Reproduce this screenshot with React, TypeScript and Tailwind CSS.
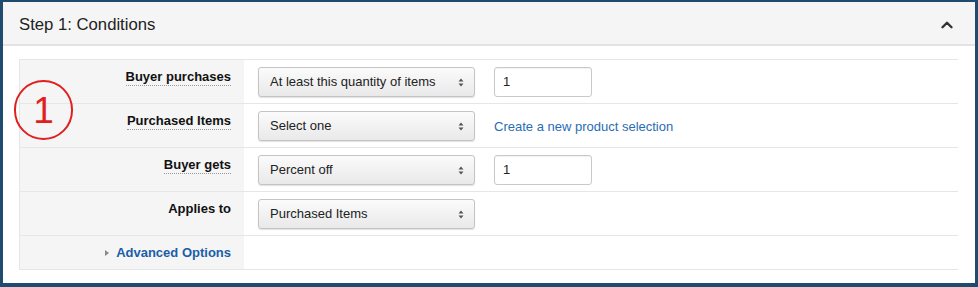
import { ChevronUp } from 'lucide-react';

function Arrows() {
  return (
    <svg width="6" height="9" viewBox="0 0 6 9" className="shrink-0">
      <path d="M3 0.5 L5.5 3.5 L0.5 3.5 Z" fill="#555" />
      <path d="M3 8.5 L5.5 5.5 L0.5 5.5 Z" fill="#555" />
    </svg>
  );
}

function FakeSelect({ value }: { value: string }) {
  return (
    <div className="w-[217px] h-[30px] flex items-center justify-between pl-[11px] pr-[10px] rounded-[3px] border border-[#c4c4c4] bg-gradient-to-b from-[#fbfbfb] to-[#e9e9e9] shadow-[0_1px_1px_rgba(0,0,0,0.12)] text-[13px] text-[#222]">
      <span>{value}</span>
      <Arrows />
    </div>
  );
}

function FakeInput({ value }: { value: string }) {
  return (
    <div className="w-[98px] h-[30px] flex items-center pl-[8px] rounded-[3px] border border-[#c9c9c9] bg-white shadow-[inset_0_1px_1px_rgba(0,0,0,0.06)] text-[13px] text-[#222]">
      {value}
    </div>
  );
}

export default function App() {
  const rows = [
    { label: "Buyer purchases", dotted: true, select: "At least this quantity of items", extra: "input" },
    { label: "Purchased Items", dotted: true, select: "Select one", extra: "link" },
    { label: "Buyer gets", dotted: true, select: "Percent off", extra: "input" },
    { label: "Applies to", dotted: false, select: "Purchased Items", extra: "" },
  ];

  return (
    <div className="w-[978px] h-[287px] bg-[#1f4b6e] pt-[2px] pl-[3px] pr-[3px] pb-[4px] font-['Liberation_Sans',Arial,sans-serif]">
      <div className="relative bg-white h-full flex flex-col">
        <div className="h-[44px] shrink-0 bg-[#f5f5f5] border-b-2 border-[#e3e3e3] flex items-center justify-between pl-[16px] pr-[19px] pt-[4px]">
          <span className="text-[16.7px] text-[#222]">Step 1: Conditions</span>
          <ChevronUp size={18} strokeWidth={3.2} className="text-[#333]" />
        </div>

        <div className="mt-[13px] ml-[16px] mr-[17px] border-t border-l border-[#e6e6e6]">
          {rows.map((row, idx) => (
            <div key={idx} className="flex h-[44px] border-b border-[#e6e6e6]">
              <div className="w-[224px] shrink-0 bg-[#f5f5f5] flex justify-end items-start pr-[13px] pt-[9px]">
                <span
                  className={
                    row.dotted
                      ? "text-[13px] leading-[16px] font-bold text-[#111] border-b border-dotted border-[#999]"
                      : "text-[13px] leading-[16px] font-bold text-[#111]"
                  }
                >
                  {row.label}
                </span>
              </div>
              <div className="flex-1 flex items-start gap-[19px] pl-[14px] pt-[7px]">
                <FakeSelect value={row.select} />
                {row.extra === "input" && <FakeInput value="1" />}
                {row.extra === "link" && (
                  <span className="h-[30px] flex items-center pt-[2px] text-[13px] text-[#2a6cb5]">
                    Create a new product selection
                  </span>
                )}
              </div>
            </div>
          ))}
          <div className="flex h-[34px] border-b border-[#e6e6e6]">
            <div className="w-[224px] shrink-0 bg-[#f5f5f5] flex justify-end items-center gap-[7px] pr-[13px] pt-[1px]">
              <svg width="4" height="6" viewBox="0 0 4 6">
                <path d="M0 0 L4 3 L0 6 Z" fill="#888" />
              </svg>
              <span className="text-[13px] font-bold text-[#1a5ea8]">Advanced Options</span>
            </div>
            <div className="flex-1" />
          </div>
        </div>

        <div className="absolute left-[11px] top-[78px] w-[59px] h-[60px] rounded-full border-2 border-[#e01f1f] flex items-center justify-center">
          <span className="text-[37px] leading-none text-[#e01f1f]">1</span>
        </div>
      </div>
    </div>
  );
}
